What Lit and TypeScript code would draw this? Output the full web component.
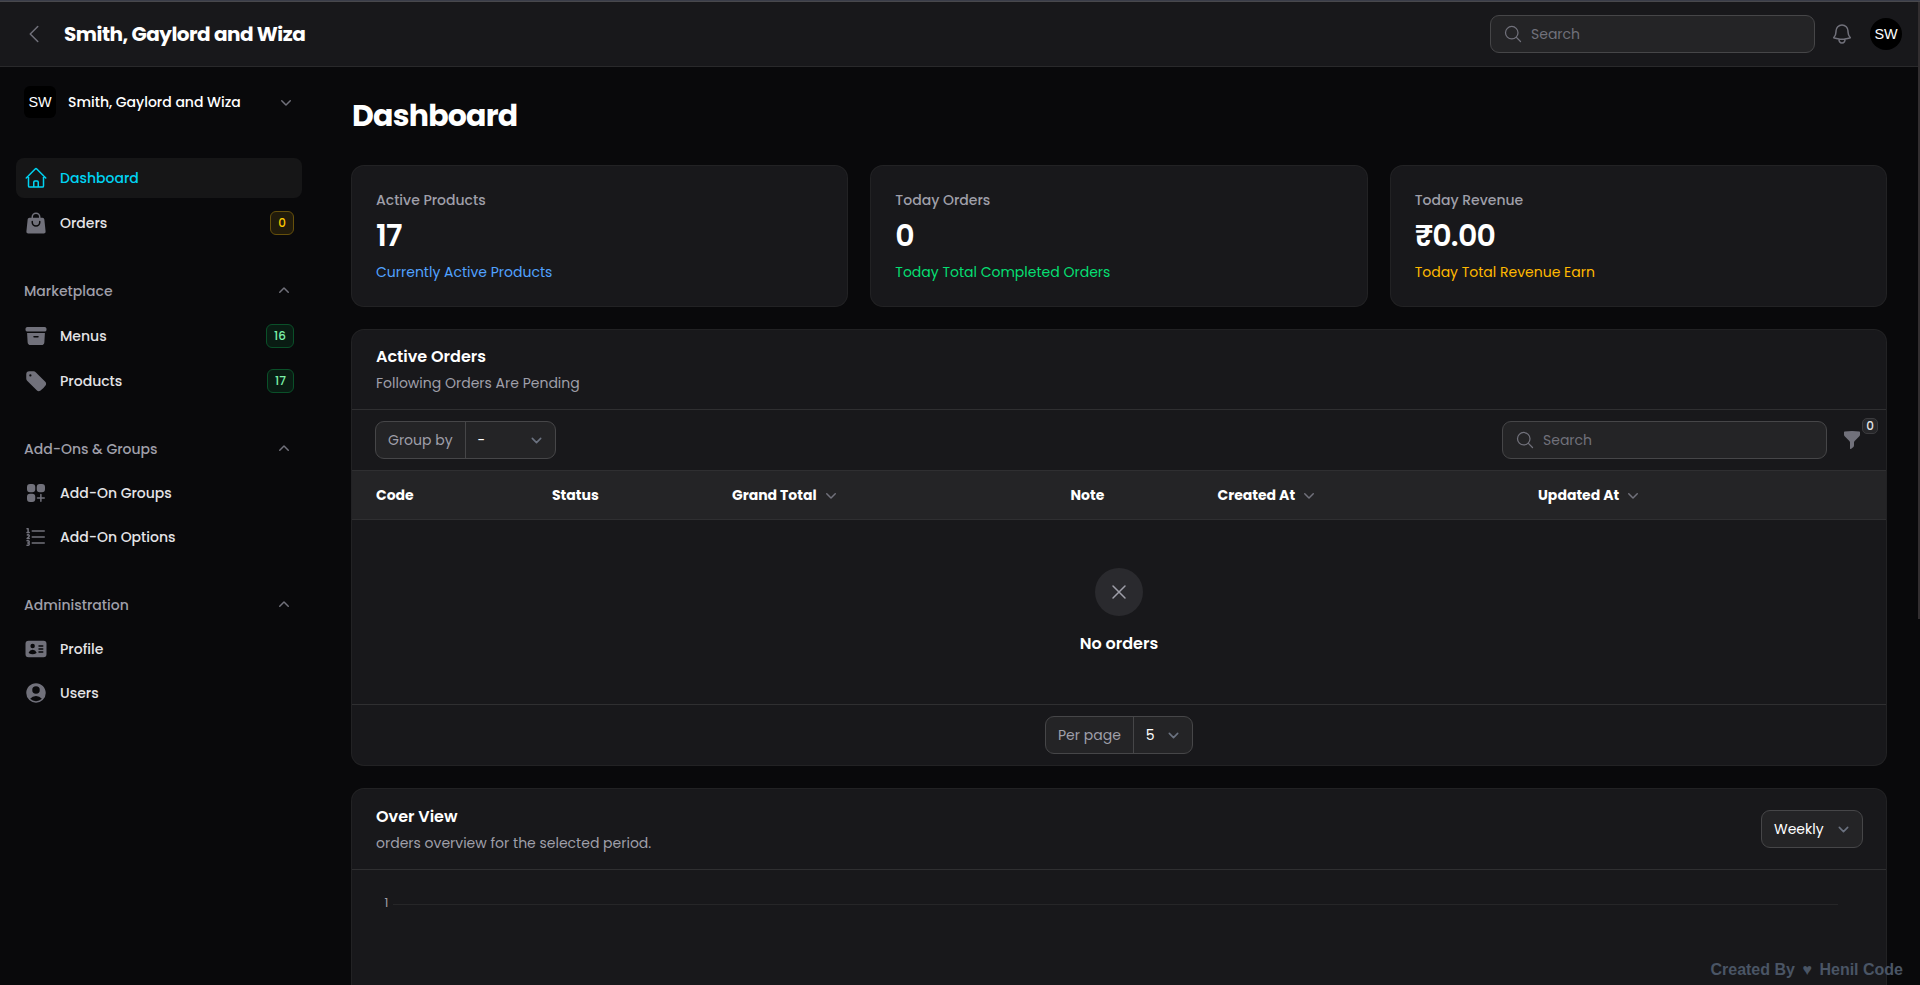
import { LitElement, html, svg, css, nothing } from "lit";
import { classMap } from "lit/directives/class-map.js";

const ICONS: Record<string, { paths: string[]; line?: boolean; box?: number }> = {
  home: { line: true, paths: ["m2.25 12 8.954-8.955c.44-.439 1.152-.439 1.591 0L21.75 12M4.5 9.75v10.125c0 .621.504 1.125 1.125 1.125H9.75v-4.875c0-.621.504-1.125 1.125-1.125h2.25c.621 0 1.125.504 1.125 1.125V21h4.125c.621 0 1.125-.504 1.125-1.125V9.75M8.25 21h8.25"] },
  bag: { paths: ["M7.5 6v.75H5.513c-.96 0-1.764.724-1.865 1.679l-1.263 12A1.875 1.875 0 0 0 4.25 22.5h15.5a1.875 1.875 0 0 0 1.865-2.071l-1.263-12a1.875 1.875 0 0 0-1.865-1.679H16.5V6a4.5 4.5 0 1 0-9 0ZM12 3a3 3 0 0 0-3 3v.75h6V6a3 3 0 0 0-3-3Zm-3 8.25a3 3 0 1 0 6 0v-.75a.75.75 0 0 1 1.5 0v.75a4.5 4.5 0 1 1-9 0v-.75a.75.75 0 0 1 1.5 0v.75Z"] },
  archive: { paths: ["M3.375 3C2.339 3 1.5 3.84 1.5 4.875v.75c0 1.036.84 1.875 1.875 1.875h17.25c1.035 0 1.875-.84 1.875-1.875v-.75C22.5 3.839 21.66 3 20.625 3H3.375Z", "m3.087 9 .54 9.176A3 3 0 0 0 6.62 21h10.757a3 3 0 0 0 2.995-2.824L20.913 9H3.087Zm6.163 3.75A.75.75 0 0 1 10 12h4a.75.75 0 0 1 0 1.5h-4a.75.75 0 0 1-.75-.75Z"] },
  tag: { paths: ["M5.25 2.25a3 3 0 0 0-3 3v4.318a3 3 0 0 0 .879 2.121l9.58 9.581c.92.92 2.39 1.186 3.548.428a18.849 18.849 0 0 0 5.441-5.44c.758-1.16.492-2.629-.428-3.548l-9.58-9.581a3 3 0 0 0-2.122-.879H5.25ZM6.375 7.5a1.125 1.125 0 1 0 0-2.25 1.125 1.125 0 0 0 0 2.25Z"] },
  squares: { paths: ["M6 3a3 3 0 0 0-3 3v2.25a3 3 0 0 0 3 3h2.25a3 3 0 0 0 3-3V6a3 3 0 0 0-3-3H6ZM15.75 3a3 3 0 0 0-3 3v2.25a3 3 0 0 0 3 3H18a3 3 0 0 0 3-3V6a3 3 0 0 0-3-3h-2.25ZM6 12.75a3 3 0 0 0-3 3V18a3 3 0 0 0 3 3h2.25a3 3 0 0 0 3-3v-2.25a3 3 0 0 0-3-3H6ZM17.625 13.5a.75.75 0 0 0-1.5 0v2.625H13.5a.75.75 0 0 0 0 1.5h2.625v2.625a.75.75 0 0 0 1.5 0v-2.625h2.625a.75.75 0 0 0 0-1.5h-2.625V13.5Z"] },
  list: { paths: ["M7.491 5.992a.75.75 0 0 1 .75-.75h12a.75.75 0 1 1 0 1.5h-12a.75.75 0 0 1-.75-.75ZM7.491 11.995a.75.75 0 0 1 .75-.75h12a.75.75 0 1 1 0 1.5h-12a.75.75 0 0 1-.75-.75ZM7.491 17.998a.75.75 0 0 1 .75-.75h12a.75.75 0 1 1 0 1.5h-12a.75.75 0 0 1-.75-.75Z", "M2.24 3.745a.75.75 0 0 1 .75-.75h1.125a.75.75 0 0 1 .75.75v3h.375a.75.75 0 0 1 0 1.5H2.99a.75.75 0 0 1 0-1.5h.375v-2.25H2.99a.75.75 0 0 1-.75-.75ZM2.79 10.602a.75.75 0 0 1 0-1.06 1.875 1.875 0 1 1 2.652 2.651l-.55.55h.35a.75.75 0 0 1 0 1.5h-2.16a.75.75 0 0 1-.53-1.281l1.83-1.83a.375.375 0 0 0-.53-.53.75.75 0 0 1-1.062 0ZM2.24 15.745a.75.75 0 0 1 .75-.75h1.125a1.875 1.875 0 0 1 1.501 2.999 1.875 1.875 0 0 1-1.501 3H2.99a.75.75 0 0 1 0-1.501h1.125a.375.375 0 0 0 .036-.748H3.74a.75.75 0 0 1-.75-.75v-.002a.75.75 0 0 1 .75-.75h.411a.375.375 0 0 0-.036-.748H2.99a.75.75 0 0 1-.75-.75Z"] },
  idcard: { paths: ["M4.5 3.75a3 3 0 0 0-3 3v10.5a3 3 0 0 0 3 3h15a3 3 0 0 0 3-3V6.75a3 3 0 0 0-3-3h-15Zm4.125 3a2.25 2.25 0 1 0 0 4.5 2.25 2.25 0 0 0 0-4.5Zm-3.873 8.703a4.126 4.126 0 0 1 7.746 0 .75.75 0 0 1-.351.92 7.47 7.47 0 0 1-3.522.877 7.47 7.47 0 0 1-3.522-.877.75.75 0 0 1-.351-.92ZM15 8.25a.75.75 0 0 0 0 1.5h3.75a.75.75 0 0 0 0-1.5H15ZM14.25 12a.75.75 0 0 1 .75-.75h3.75a.75.75 0 0 1 0 1.5H15a.75.75 0 0 1-.75-.75Zm.75 2.25a.75.75 0 0 0 0 1.5h3.75a.75.75 0 0 0 0-1.5H15Z"] },
  user: { paths: ["M18.685 19.097A9.723 9.723 0 0 0 21.75 12c0-5.385-4.365-9.75-9.75-9.75S2.25 6.615 2.25 12a9.723 9.723 0 0 0 3.065 7.097A9.716 9.716 0 0 0 12 21.75a9.716 9.716 0 0 0 6.685-2.653Zm-12.54-1.285A7.486 7.486 0 0 1 12 15a7.486 7.486 0 0 1 5.855 2.812A8.224 8.224 0 0 1 12 20.25a8.224 8.224 0 0 1-5.855-2.438ZM15.75 9a3.75 3.75 0 1 1-7.5 0 3.75 3.75 0 0 1 7.5 0Z"] },
  bell: { line: true, paths: ["M14.857 17.082a23.848 23.848 0 0 0 5.454-1.31A8.967 8.967 0 0 1 18 9.75V9A6 6 0 0 0 6 9v.75a8.967 8.967 0 0 1-2.312 6.022c1.733.64 3.56 1.085 5.455 1.31m5.714 0a24.255 24.255 0 0 1-5.714 0m5.714 0a3 3 0 1 1-5.714 0"] },
  search: { line: true, paths: ["m21 21-5.197-5.197m0 0A7.5 7.5 0 1 0 5.196 5.196a7.5 7.5 0 0 0 10.607 10.607Z"] },
  back: { line: true, paths: ["M15.75 19.5 8.25 12l7.5-7.5"] },
  cross: { line: true, paths: ["M6 18 18 6M6 6l12 12"] },
  down: { box: 20, paths: ["M5.22 8.22a.75.75 0 0 1 1.06 0L10 11.94l3.72-3.72a.75.75 0 1 1 1.06 1.06l-4.25 4.25a.75.75 0 0 1-1.06 0L5.22 9.28a.75.75 0 0 1 0-1.06Z"] },
  up: { box: 20, paths: ["M14.78 11.78a.75.75 0 0 1-1.06 0L10 8.06l-3.72 3.72a.75.75 0 0 1-1.06-1.06l4.25-4.25a.75.75 0 0 1 1.06 0l4.25 4.25a.75.75 0 0 1 0 1.06Z"] },
  caret: { box: 20, line: true, paths: ["m6 8 4 4 4-4"] },
  funnel: { box: 20, paths: ["M2.628 1.601C5.028 1.206 7.49 1 10 1s4.973.206 7.372.601a.75.75 0 0 1 .628.74v2.288a2.25 2.25 0 0 1-.659 1.59l-4.682 4.683a2.25 2.25 0 0 0-.659 1.59v3.037c0 .684-.31 1.33-.844 1.757l-1.937 1.55A.75.75 0 0 1 8 18.25v-5.757a2.25 2.25 0 0 0-.659-1.591L2.659 6.22A2.25 2.25 0 0 1 2 4.629V2.34a.75.75 0 0 1 .628-.74Z"] },
};

const icon = (name: string, size = 24) => {
  const i = ICONS[name];
  const b = i.box ?? 24;
  return html`<svg class=${i.line ? "ico line" : "ico"} width=${size} height=${size} viewBox="0 0 ${b} ${b}">
    ${i.paths.map((d) => svg`<path fill-rule="evenodd" clip-rule="evenodd" d=${d}></path>`)}
  </svg>`;
};

const base = css`
  :host, * { box-sizing: border-box; }
  .ico { display: block; flex: none; fill: currentColor; }
  .line { fill: none; stroke: currentColor; stroke-width: 1.5; stroke-linecap: round; stroke-linejoin: round; }
  .avatar {
    display: grid; place-items: center; width: 32px; height: 32px; flex: none;
    background: #000; color: #fff; font: 14.4px/32px "Liberation Sans", Arial, sans-serif;
  }
  .search {
    display: flex; align-items: center; gap: 8px; width: 325px; height: 38px; padding: 0 12px;
    border: 1px solid #464648; border-radius: 9px; background: #242426; color: #71717b; font-size: 14px;
  }
`;

class AppHeader extends LitElement {
  static styles = [base, css`
    :host { display: block; }
    .bar {
      display: flex; align-items: center; height: 65px; padding: 0 18px 0 22px;
      background: #18181b; border-bottom: 1px solid #29292b; color: #71717b;
    }
    .title { margin-left: 18px; font-size: 20px; line-height: 28px; font-weight: 700; letter-spacing: -0.025em; color: #fff; }
    .right { display: flex; align-items: center; gap: 16px; margin-left: auto; }
    .right .search { margin-right: -1px; }
    .round { border-radius: 50%; }
  `];
  render() {
    return html`<header class="bar">
      ${icon("back")}
      <div class="title">Smith, Gaylord and Wiza</div>
      <div class="right">
        <div class="search">${icon("search", 20)}<span>Search</span></div>
        ${icon("bell")}
        <div class="avatar round">SW</div>
      </div>
    </header>`;
  }
}

type Item = { icon: string; label: string; badge?: string; tone?: string; active?: boolean };
const NAV: { label?: string; items: Item[] }[] = [
  { items: [{ icon: "home", label: "Dashboard", active: true }, { icon: "bag", label: "Orders", badge: "0", tone: "warn" }] },
  { label: "Marketplace", items: [{ icon: "archive", label: "Menus", badge: "16", tone: "ok" }, { icon: "tag", label: "Products", badge: "17", tone: "ok" }] },
  { label: "Add-Ons & Groups", items: [{ icon: "squares", label: "Add-On Groups" }, { icon: "list", label: "Add-On Options" }] },
  { label: "Administration", items: [{ icon: "idcard", label: "Profile" }, { icon: "user", label: "Users" }] },
];

class AppSidebar extends LitElement {
  static styles = [base, css`
    :host { display: block; width: 320px; flex: none; padding: 19px 18px 0 16px; font-size: 14px; line-height: 20px; font-weight: 500; }
    .tenant { display: flex; align-items: center; height: 32px; padding: 0 6px 0 8px; margin-bottom: 40px; color: #71717b; }
    .tenant .avatar { border-radius: 6px; }
    .tenant .name { flex: 1; margin-left: 12px; color: #fff; }
    .nav { display: flex; flex-direction: column; gap: 28px; }
    .group { display: flex; flex-direction: column; gap: 4px; }
    .head { display: flex; align-items: center; justify-content: space-between; height: 40px; padding: 0 8px; color: #9f9fa9; }
    .head .ico { color: #71717b; }
    .item { display: flex; align-items: center; gap: 12px; min-height: 40px; padding: 8px; border-radius: 8px; color: #e4e4e7; }
    .item .ico { color: #71717b; }
    .item.tall { min-height: 41px; padding-block: 9px 8px; }
    .item.active { background: #161617; color: #00d3f2; }
    .item.active .ico { color: #00d3f2; }
    .text { flex: 1; }
    .badge {
      height: 24px; min-width: 24px; padding: 0 7px; border: 1px solid; border-radius: 6px;
      font-size: 12px; line-height: 22px; text-align: center;
    }
    .warn { color: #fcc800; background: #211b0b; border-color: #66500b; }
    .ok { color: #7bf1a8; background: #091c13; border-color: #0a5029; }
  `];
  render() {
    return html`
      <div class="tenant"><div class="avatar">SW</div><span class="name">Smith, Gaylord and Wiza</span>${icon("down", 20)}</div>
      <nav class="nav">
        ${NAV.map((g) => html`<div class="group">
          ${g.label ? html`<div class="head"><span>${g.label}</span>${icon("up", 20)}</div>` : nothing}
          ${g.items.map((i) => html`<div class=${classMap({ item: true, active: !!i.active, tall: !!i.badge })}>
            ${icon(i.icon)}<span class="text">${i.label}</span>
            ${i.badge ? html`<span class=${"badge " + i.tone}>${i.badge}</span>` : nothing}
          </div>`)}
        </div>`)}
      </nav>`;
  }
}

const STATS = [
  { label: "Active Products", value: "17", note: "Currently Active Products", tone: "blue" },
  { label: "Today Orders", value: "0", note: "Today Total Completed Orders", tone: "green" },
  { label: "Today Revenue", value: "₹0.00", note: "Today Total Revenue Earn", tone: "amber" },
];
const COLUMNS = [
  { label: "Code" }, { label: "Status" }, { label: "Grand Total", sort: true },
  { label: "Note" }, { label: "Created At", sort: true }, { label: "Updated At", sort: true },
];

class AppDashboard extends LitElement {
  static styles = [base, css`
    :host { display: block; flex: 1; min-width: 0; padding: 31px 34px 0 32px; font-size: 14px; line-height: 20px; }
    h1 { margin: 0 0 32px; font-size: 30px; line-height: 36px; font-weight: 700; letter-spacing: -0.025em; }
    .stack { display: flex; flex-direction: column; gap: 24px; }
    .card { background: #18181b; border-radius: 12px; box-shadow: 0 0 0 1px #222224; }
    .stats { display: grid; grid-template-columns: repeat(3, 1fr); gap: 24px; }
    .stat { display: flex; flex-direction: column; gap: 8px; padding: 24px; }
    .label { font-weight: 500; color: #9f9fa9; }
    .value { font-size: 30px; line-height: 36px; font-weight: 600; letter-spacing: -0.025em; }
    .blue { color: #51a2ff; }
    .green { color: #05df72; }
    .amber { color: #ffb900; }
    .cardhead { display: flex; align-items: center; justify-content: space-between; padding: 16px 24px; }
    .cardhead.tight { padding-top: 15px; }
    .heading { font-size: 16px; line-height: 24px; font-weight: 600; }
    .sub { margin-top: 4px; color: #9f9fa9; }
    .tools { display: flex; align-items: center; padding: 11px 24px 11px 23px; border-top: 1px solid #2f2f31; }
    .tools .search { margin-left: auto; }
    .select { display: flex; align-items: stretch; height: 38px; border: 1px solid #464648; border-radius: 9px; background: #242426; line-height: 36px; }
    .prefix { padding: 0 12px; border-right: 1px solid #464648; color: #9f9fa9; }
    .choice { display: flex; align-items: center; justify-content: space-between; flex: 1; padding: 0 8px 0 12px; }
    .choice .ico { color: #6b7280; }
    .groupby { width: 181px; }
    .perpage { width: 148px; }
    .period { width: 102px; margin: -1px; }
    .filter { position: relative; margin-left: 15px; color: #71717b; }
    .count {
      position: absolute; left: 20px; top: -12px; width: 16px; height: 16px; border: 1px solid #3b3b3e; border-radius: 5px;
      background: #27272a; color: #e4e4e7; font-size: 12px; line-height: 14px; font-weight: 500; text-align: center;
    }
    .columns {
      display: grid; grid-template-columns: 176px 180px 338.5px 147px 320.5px 1fr; align-items: center; height: 50px; padding: 0 0 0 24px;
      background: #242426; border-block: 1px solid #2f2f31; font-weight: 700;
    }
    .col { display: flex; align-items: center; gap: 4px; }
    .col .ico { color: #71717b; }
    .empty { display: flex; flex-direction: column; align-items: center; padding: 48px 0; }
    .disc { display: grid; place-items: center; width: 48px; height: 48px; margin-bottom: 16px; border-radius: 50%; background: #2a2a2e; color: #9f9fa9; }
    .foot { display: flex; justify-content: center; padding: 11px; border-top: 1px solid #2f2f31; }
    .chart { display: flex; height: 300px; padding: 24px 48px 24px 32.5px; border-top: 1px solid #2f2f31; font-size: 12px; line-height: 18px; color: #9f9fa9; }
    .tick { width: 8px; }
    .grid { flex: 1; height: 1px; margin-top: 10px; background: #262628; }
  `];
  render() {
    return html`
      <h1>Dashboard</h1>
      <div class="stack">
        <section class="stats">
          ${STATS.map((s) => html`<div class="card stat">
            <div class="label">${s.label}</div><div class="value">${s.value}</div><div class=${s.tone}>${s.note}</div>
          </div>`)}
        </section>
        <section class="card">
          <div class="cardhead tight"><div><div class="heading">Active Orders</div><div class="sub">Following Orders Are Pending</div></div></div>
          <div class="tools">
            <div class="select groupby"><span class="prefix">Group by</span><span class="choice"><span>-</span>${icon("caret", 21)}</span></div>
            <div class="search">${icon("search", 20)}<span>Search</span></div>
            <div class="filter">${icon("funnel", 20)}<span class="count">0</span></div>
          </div>
          <div class="columns">
            ${COLUMNS.map((c) => html`<div class="col"><span>${c.label}</span>${c.sort ? icon("down", 20) : nothing}</div>`)}
          </div>
          <div class="empty"><div class="disc">${icon("cross")}</div><div class="heading">No orders</div></div>
          <div class="foot">
            <div class="select perpage"><span class="prefix">Per page</span><span class="choice"><span>5</span>${icon("caret", 21)}</span></div>
          </div>
        </section>
        <section class="card">
          <div class="cardhead">
            <div><div class="heading">Over View</div><div class="sub">orders overview for the selected period.</div></div>
            <div class="select period"><span class="choice"><span>Weekly</span>${icon("caret", 21)}</span></div>
          </div>
          <div class="chart"><span class="tick">1</span><div class="grid"></div></div>
        </section>
      </div>`;
  }
}

class AppRoot extends LitElement {
  static styles = css`
    :host {
      display: block; position: relative; height: 985px; overflow: hidden; background: #09090b; color: #fff;
      font-family: "Poppins", "Inter", sans-serif;
    }
    .edge { height: 2px; background: linear-gradient(#3a3d49 50%, #48484c 50%); }
    .body { display: flex; }
    .scroll { position: absolute; right: 0; top: 2px; width: 2px; height: 617px; background: #322e30; }
    .credit {
      position: absolute; right: 17px; bottom: 6px; display: flex; gap: 7.5px; white-space: pre;
      font: 700 16px/18px "Liberation Sans", Arial, sans-serif; color: #4a5565;
    }
  `;
  render() {
    return html`
      <div class="edge"></div>
      <app-header></app-header>
      <div class="body"><app-sidebar></app-sidebar><app-dashboard></app-dashboard></div>
      <div class="scroll"></div>
      <div class="credit"><span>Created By</span><span>♥</span><span>Henil Code</span></div>`;
  }
}

customElements.define("app-header", AppHeader);
customElements.define("app-sidebar", AppSidebar);
customElements.define("app-dashboard", AppDashboard);
customElements.define("app-root", AppRoot);
